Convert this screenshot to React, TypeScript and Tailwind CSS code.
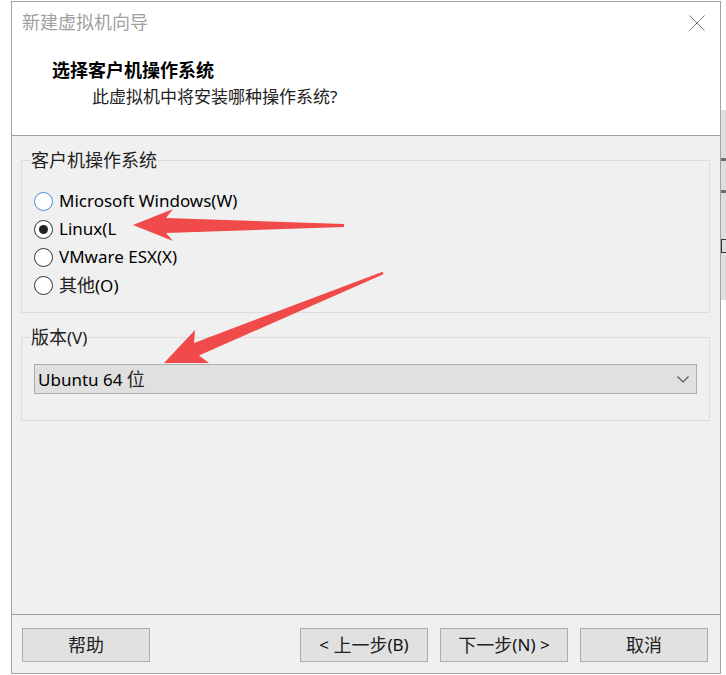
import React from "react";
import clsx from "clsx";

function Radio({
  checked = false,
  focus = false,
  children,
}: {
  checked?: boolean;
  focus?: boolean;
  children: React.ReactNode;
}) {
  return (
    <label className="flex h-[28px] items-center gap-[6px]">
      <span
        className={clsx(
          "flex h-[19px] w-[19px] items-center justify-center rounded-full border bg-white",
          focus ? "border-[#3f8fdc]" : "border-[#333333]"
        )}
      >
        {checked && <span className="h-[9px] w-[9px] rounded-full bg-[#222222]" />}
      </span>
      <span className="text-[17px] text-black">{children}</span>
    </label>
  );
}

function Button({ children }: { children: React.ReactNode }) {
  return (
    <button className="flex h-[34px] w-[128px] items-center justify-center border border-[#adadad] bg-[#e1e1e1] text-[17px] text-[#111111]">
      {children}
    </button>
  );
}

// 한자 부분은 조금 크게
const Cjk = ({ children }: { children: React.ReactNode }) => (
  <span className="text-[18px] text-[#222222]">{children}</span>
);

export default function App() {
  return (
    <div className="relative flex h-[675px] w-[726px] bg-white font-['Noto_Sans','Noto_Sans_CJK_SC',sans-serif] leading-[20px]">
      <div className="w-[11px] shrink-0" />

      {/* 대화상자 */}
      <div className="mt-[1px] flex h-[673px] w-[710px] shrink-0 flex-col border border-[#a3a3a3] bg-white">
        <div className="h-[134px] shrink-0 border-b border-[#a0a0a0] bg-white pt-[10px] pr-[15px] pl-[10px]">
          <div className="flex h-[20px] items-center justify-between">
            <span className="text-[18px] text-[#a0a0a0]">新建虚拟机向导</span>
            <svg width="16" height="16" viewBox="0 0 16 16" className="mt-[2px]">
              <path d="M0.5 0.5 L15.5 15.5 M15.5 0.5 L0.5 15.5" stroke="#777777" strokeWidth="1" fill="none" />
            </svg>
          </div>
          <div className="mt-[28px] ml-[30px] h-[20px] text-[18px] font-bold text-black">
            选择客户机操作系统
          </div>
          <div className="mt-[7px] ml-[70px] h-[20px] text-[17px] text-[#222222]">
            此虚拟机中将安装哪种操作系统<span className="text-[17px]">?</span>
          </div>
        </div>

        <div className="flex-1 bg-[#f0f0f0] pt-[14px] pr-[10px] pl-[9px]">
          <fieldset className="border border-[#dcdcdc] pt-[16px] pr-[12px] pb-[13px] pl-[12px]">
            <legend className="-ml-[4px] px-[1px] leading-[20px]">
              <Cjk>客户机操作系统</Cjk>
            </legend>
            <Radio focus>Microsoft Windows(W)</Radio>
            <Radio checked>Linux(L</Radio>
            <Radio>VMware ESX(X)</Radio>
            <Radio>
              <Cjk>其他</Cjk>(O)
            </Radio>
          </fieldset>

          <fieldset className="mt-[14px] border border-[#dcdcdc] pt-[16px] pr-[12px] pb-[26px] pl-[12px]">
            <legend className="-ml-[4px] px-[1px] text-[17px] leading-[20px] text-[#222222]">
              <Cjk>版本</Cjk>(V)
            </legend>
            <div className="flex h-[30px] items-center justify-between border border-[#adadad] bg-[#e0e0e0] pr-[7px] pl-[3px]">
              <span className="text-[17px] text-black">
                Ubuntu 64 <Cjk>位</Cjk>
              </span>
              <svg width="12" height="7" viewBox="0 0 12 7">
                <path d="M0.5 0.5 L6 6 L11.5 0.5" stroke="#555555" strokeWidth="1.2" fill="none" />
              </svg>
            </div>
          </fieldset>
        </div>

        <div className="flex h-[59px] shrink-0 border-t border-[#a0a0a0] bg-[#f0f0f0] pt-[13px] pr-[12px] pl-[10px]">
          <Button>
            <Cjk>帮助</Cjk>
          </Button>
          <div className="ml-auto flex gap-[12px]">
            <Button>
              &lt;&nbsp;<Cjk>上一步</Cjk>(B)
            </Button>
            <Button>
              <Cjk>下一步</Cjk>(N)&nbsp;&gt;
            </Button>
            <Button>
              <Cjk>取消</Cjk>
            </Button>
          </div>
        </div>
      </div>

      {/* 뒤에 있는 창 일부 */}
      <div className="flex w-[5px] shrink-0 flex-col">
        <div className="h-[110px]" />
        <div className="flex h-[190px] flex-col bg-[#dedede]">
          <div className="h-[48px]" />
          <div className="h-[3px] bg-[#6e6e6e]" />
          <div className="h-[29px]" />
          <div className="h-[3px] bg-[#6e6e6e]" />
          <div className="h-[46px]" />
          <div className="h-[14px] border-y border-l border-[#333333]" />
        </div>
      </div>

      {/* 빨간 화살표 */}
      <svg
        className="pointer-events-none absolute inset-0"
        width="726"
        height="675"
        viewBox="0 0 726 675"
      >
        <polygon
          points="133,225 173,209 166,218 344,224 344,227 166,233 173,241"
          fill="#f04a4a"
        />
        <polygon
          points="164,363 209,363 199,355.5 383.4,274.2 382.6,271.8 194,343 195,330"
          fill="#f04a4a"
        />
      </svg>
    </div>
  );
}
